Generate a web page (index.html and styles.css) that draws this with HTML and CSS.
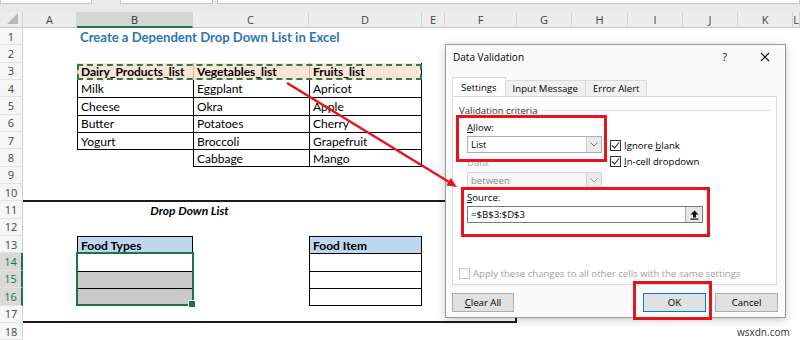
FILE: index.html
```html
<!DOCTYPE html>
<html lang="en">
<head>
    <meta charset="UTF-8">
    <meta name="viewport" content="width=device-width, initial-scale=1.0">
    <title>Create a Dependent Drop Down List in Excel</title>
    <link rel="stylesheet" href="styles.css">
</head>
<body>
<div class="app">
    <div class="toolbar">
        <span class="field name-box"></span>
        <span class="field fx-box"></span>
        <span class="field formula-box"></span>
    </div>

    <div class="sheet">
        <!-- column headers -->
        <div class="corner"><span class="tri"></span></div>
        <div class="ch">A</div>
        <div class="ch on">B</div>
        <div class="ch">C</div>
        <div class="ch">D</div>
        <div class="ch">E</div>
        <div class="ch">F</div>
        <div class="ch">G</div>
        <div class="ch">H</div>
        <div class="ch">I</div>
        <div class="ch">J</div>
        <div class="ch">K</div>
        <div class="ch">L</div>

        <!-- row headers -->
        <div class="rh r1">1</div>
        <div class="rh r2">2</div>
        <div class="rh r3">3</div>
        <div class="rh r4">4</div>
        <div class="rh r5">5</div>
        <div class="rh r6">6</div>
        <div class="rh r7">7</div>
        <div class="rh r8">8</div>
        <div class="rh r9">9</div>
        <div class="rh r10">10</div>
        <div class="rh r11">11</div>
        <div class="rh r12">12</div>
        <div class="rh r13">13</div>
        <div class="rh r14 on">14</div>
        <div class="rh r15 on">15</div>
        <div class="rh r16 on">16</div>
        <div class="rh r17">17</div>
        <div class="rh r18">18</div>

        <div class="band"></div>

        <div class="cell title r1">Create a Dependent Drop Down List in Excel</div>

        <!-- source lists -->
        <div class="cell t peach b r3 cB">Dairy_Products_list</div>
        <div class="cell t peach b r3 cC">Vegetables_list</div>
        <div class="cell t peach b rc r3 cD">Fruits_list</div>
        <div class="ants"></div>

        <div class="cell t nt r4 cB">Milk</div>
        <div class="cell t nt r4 cC">Eggplant</div>
        <div class="cell t nt rc r4 cD">Apricot</div>
        <div class="cell t r5 cB">Cheese</div>
        <div class="cell t r5 cC">Okra</div>
        <div class="cell t rc r5 cD">Apple</div>
        <div class="cell t r6 cB">Butter</div>
        <div class="cell t r6 cC">Potatoes</div>
        <div class="cell t rc r6 cD">Cherry</div>
        <div class="cell t r7 cB">Yogurt</div>
        <div class="cell t r7 cC">Broccoli</div>
        <div class="cell t rc r7 cD">Grapefruit</div>
        <div class="cell cap r8 cB"></div>
        <div class="cell t bt r8 cC">Cabbage</div>
        <div class="cell t bt rc r8 cD">Mango</div>

        <div class="cell caption r11">Drop Down List</div>

        <!-- drop down cells -->
        <div class="cell t rc blue b r13 cB">Food Types</div>
        <div class="cell t rc r14 cB"></div>
        <div class="cell t rc shade r15 cB"></div>
        <div class="cell t rc bt shade r16 cB"></div>
        <div class="sel"></div>

        <div class="cell t rc blue b r13 cD">Food Item</div>
        <div class="cell t rc r14 cD"></div>
        <div class="cell t rc r15 cD"></div>
        <div class="cell t rc bt r16 cD"></div>
    </div>

    <div class="dialog">
        <div class="dlg-title">
            <span class="dlg-name">Data Validation</span>
            <span class="dlg-help">?</span>
            <svg class="dlg-close" width="10" height="10" viewBox="0 0 10 10">
                <path d="M1 1 L9 9 M9 1 L1 9" stroke="#111" stroke-width="1.1" fill="none"/>
            </svg>
        </div>
        <div class="tabs">
            <span class="tab active">Settings</span>
            <span class="tab">Input Message</span>
            <span class="tab">Error Alert</span>
        </div>
        <div class="panel">
            <div class="legend"><span>Validation criteria</span></div>
            <div class="criteria">
                <div class="allow">
                    <div class="lbl"><u>A</u>llow:</div>
                    <div class="select">
                        <span>List</span>
                        <span class="drop"><svg width="8" height="5" viewBox="0 0 8 5"><path d="M0.5 0.5 L4 4 L7.5 0.5" stroke="#777" fill="none"/></svg></span>
                    </div>
                </div>
                <div class="checks">
                    <div class="check"><span class="box"><svg width="9" height="9" viewBox="0 0 9 9"><path d="M1 4.5 L3.5 7 L8 1.5" stroke="#222" stroke-width="1.1" fill="none"/></svg></span><span>Ignore <u>b</u>lank</span></div>
                    <div class="check"><span class="box"><svg width="9" height="9" viewBox="0 0 9 9"><path d="M1 4.5 L3.5 7 L8 1.5" stroke="#222" stroke-width="1.1" fill="none"/></svg></span><span><u>I</u>n-cell dropdown</span></div>
                </div>
            </div>
            <div class="lbl muted gap-data">Data:</div>
            <div class="select disabled">
                <span>between</span>
                <span class="drop"><svg width="8" height="5" viewBox="0 0 8 5"><path d="M0.5 0.5 L4 4 L7.5 0.5" stroke="#999" fill="none"/></svg></span>
            </div>
            <div class="lbl gap-source"><u>S</u>ource:</div>
            <div class="source">
                <span class="source-text">=$B$3:$D$3</span>
                <span class="pick"><svg width="9" height="10" viewBox="0 0 9 10"><path d="M4.5 0.5 L0.5 4.5 H3 V7.5 H6 V4.5 H8.5 Z" fill="#111"/><rect x="0.5" y="8.5" width="8" height="1.2" fill="#111"/></svg></span>
            </div>
            <div class="check apply"><span class="box off"></span><span>Apply these changes to all other cells with the same settings</span></div>
        </div>
        <div class="buttons">
            <span class="btn"><span><u>C</u>lear All</span></span>
            <span class="btn-group">
                <span class="btn default">OK</span>
                <span class="btn">Cancel</span>
            </span>
        </div>
    </div>

    <!-- annotations -->
    <div class="mark mark-allow"></div>
    <div class="mark mark-source"></div>
    <div class="mark mark-ok"></div>
    <svg class="arrow" width="800" height="340" viewBox="0 0 800 340">
        <line x1="287" y1="83" x2="449" y2="182" stroke="#e8141b" stroke-width="2.4"/>
        <polygon points="457,187 446.2,185.6 450.8,178" fill="#e8141b"/>
    </svg>
    <div class="watermark">wsxdn.com</div>
</div>
</body>
</html>
```

FILE: styles.css
```css
* {
    box-sizing: border-box;
}
body {
    margin: 0;
    background: #fff;
}
.app {
    position: relative;
    width: 800px;
    height: 340px;
    overflow: hidden;
    font-family: Lato, "Liberation Sans", sans-serif;
}

/* formula bar strip */
.toolbar {
    height: 12px;
    background: #e9e9e9;
    display: flex;
}
.field {
    height: 4px;
    background: #fff;
    border: 1px solid #c6c6c6;
    border-top: none;
}
.name-box {
    width: 92px;
}
.fx-box {
    width: 93px;
    margin-left: 28px;
}
.formula-box {
    flex: 1;
    margin-left: 4px;
}

/* grid */
.sheet {
    display: grid;
    grid-template-columns: 23px 54px 116px 116px 113px 23px 72px 55px 56px 55px 55px 55px 1fr;
    grid-template-rows: 16px repeat(18, 17.35px);
}
.corner {
    grid-row: 1;
    background: #ececec;
    border-right: 1px solid #d0d0d0;
    border-bottom: 1px solid #c8c8c8;
    position: relative;
}
.tri {
    position: absolute;
    right: 4px;
    bottom: 3px;
    width: 0;
    height: 0;
    border-left: 11px solid transparent;
    border-bottom: 11px solid #b9b9b9;
}
.ch {
    grid-row: 1;
    background: #ececec;
    border-right: 1px solid #d4d4d4;
    border-bottom: 1px solid #c8c8c8;
    font-family: "Open Sans", sans-serif;
    font-size: 11px;
    color: #444;
    display: flex;
    align-items: center;
    justify-content: center;
}
.ch.on {
    background: #d6d6d6;
    border-bottom: 2px solid #217346;
    color: #333;
}
.rh {
    grid-column: 1;
    background: #f6f6f6;
    border-right: 1px solid #d0d0d0;
    border-bottom: 1px solid #e2e2e2;
    font-family: "Open Sans", sans-serif;
    font-size: 11px;
    color: #444;
    display: flex;
    align-items: center;
    justify-content: center;
}
.rh.on {
    background: #d9d9d9;
    border-right: 2px solid #217346;
    color: #217346;
}

.r1 { grid-row: 2; }
.r2 { grid-row: 3; }
.r3 { grid-row: 4; }
.r4 { grid-row: 5; }
.r5 { grid-row: 6; }
.r6 { grid-row: 7; }
.r7 { grid-row: 8; }
.r8 { grid-row: 9; }
.r9 { grid-row: 10; }
.r10 { grid-row: 11; }
.r11 { grid-row: 12; }
.r12 { grid-row: 13; }
.r13 { grid-row: 14; }
.r14 { grid-row: 15; }
.r15 { grid-row: 16; }
.r16 { grid-row: 17; }
.r17 { grid-row: 18; }
.r18 { grid-row: 19; }
.cB { grid-column: 3; }
.cC { grid-column: 4; }
.cD { grid-column: 5; }

.cell {
    display: flex;
    align-items: center;
    padding-left: 3px;
    font-size: 12px;
    color: #000;
    white-space: nowrap;
    min-width: 0;
}
.t {
    border-left: 1px solid #000;
    border-top: 1px solid #000;
}
.t.nt {
    border-top: none;
}
.t.rc {
    border-right: 1px solid #000;
}
.t.bt {
    border-bottom: 1px solid #000;
}
.cap {
    border-top: 1px solid #000;
}
.b {
    font-weight: bold;
}
.title {
    grid-column: 3 / 6;
    font-size: 13.1px;
    font-weight: bold;
    color: #2e75b6;
}
.peach {
    background: #fce4d6;
    border-left-color: #c9b8ab;
    border-top: none;
}
.ants {
    grid-column: 3 / 6;
    grid-row: 4;
    margin-top: 1px;
    border: 2px dashed #2f7a4a;
}
.blue {
    background: #bdd7ee;
}
.shade {
    background: #c9c9c9;
}
.sel {
    grid-column: 3;
    grid-row: 15 / 18;
    margin: -1px -1px 0 -1px;
    border: 2px solid #217346;
    position: relative;
}
.sel::after {
    content: "";
    position: absolute;
    right: -4px;
    bottom: -4px;
    width: 6px;
    height: 6px;
    background: #217346;
    border: 1px solid #fff;
}
.band {
    grid-column: 2 / 8;
    grid-row: 12 / 19;
    border-top: 2px solid #1b1b1b;
    border-bottom: 2px solid #1b1b1b;
    border-right: 2px solid #1b1b1b;
    margin-top: -1px;
}
.caption {
    grid-column: 3 / 5;
    justify-content: center;
    padding-right: 10px;
    font-weight: bold;
    font-style: italic;
}

/* dialog */
.dialog {
    position: absolute;
    left: 445px;
    top: 44px;
    width: 341px;
    height: 274px;
    background: #fafafa;
    border: 1px solid #9a9a9a;
    box-shadow: 0 2px 8px rgba(0, 0, 0, 0.22);
    font-family: "Open Sans", sans-serif;
    font-size: 9.6px;
    color: #000;
    display: flex;
    flex-direction: column;
}
.dlg-title {
    height: 24px;
    display: flex;
    align-items: center;
    padding-left: 7px;
}
.dlg-name {
    flex: 1;
    font-size: 10px;
}
.dlg-help {
    font-size: 10.5px;
    margin-right: 33px;
}
.dlg-close {
    margin-right: 15px;
}
.tabs {
    display: flex;
    align-items: flex-end;
    height: 19px;
    margin-top: 8px;
    padding-left: 6px;
}
.tab {
    height: 16px;
    padding: 0 7px;
    border: 1px solid #d9d9d9;
    border-bottom: none;
    border-left: none;
    background: #f0f0f0;
    display: flex;
    align-items: center;
}
.tab.active {
    height: 19px;
    background: #fff;
    border-left: 1px solid #d9d9d9;
    padding: 0 8px;
}
.panel {
    height: 189px;
    margin: 0 8px 0 6px;
    background: #fff;
    border: 1px solid #d9d9d9;
    padding: 7px 6px 0 6px;
}
.legend {
    display: flex;
    align-items: center;
    height: 12px;
    color: #333;
}
.legend::after {
    content: "";
    flex: 1;
    margin-left: 4px;
    border-top: 1px solid #dcdcdc;
}
.criteria {
    display: flex;
    height: 31px;
    margin: 6px 0 0 8px;
}
.allow {
    width: 135px;
}
.lbl {
    height: 12px;
    line-height: 12px;
    margin-bottom: 2px;
}
.lbl.muted {
    color: #a6a6a6;
}
.gap-data {
    margin: 4px 0 3px 8px;
}
.gap-source {
    margin: 4px 0 2px 8px;
}
.select {
    height: 17px;
    width: 135px;
    border: 1px solid #adadad;
    background: #fff;
    display: flex;
    align-items: center;
    padding-left: 3px;
}
.select span:first-child {
    flex: 1;
}
.select.disabled {
    margin-left: 8px;
    height: 16px;
    background: #f6f6f6;
    border-color: #d4d4d4;
    color: #8c8c8c;
}
.drop {
    width: 15px;
    height: 100%;
    background: #eaeaea;
    border-left: 1px solid #d0d0d0;
    display: flex;
    align-items: center;
    justify-content: center;
}
.checks {
    margin-left: 8px;
    padding-top: 15px;
}
.check {
    display: flex;
    align-items: center;
    height: 16px;
}
.box {
    width: 11px;
    height: 11px;
    border: 1px solid #333;
    background: #fff;
    margin-right: 3px;
    display: flex;
    align-items: center;
    justify-content: center;
}
.box.off {
    border-color: #c4c4c4;
}
.source {
    margin-left: 8px;
    width: 236px;
    height: 17px;
    border: 1px solid #7a7a7a;
    background: #fff;
    display: flex;
    align-items: center;
    padding-left: 3px;
}
.source-text {
    flex: 1;
}
.pick {
    width: 17px;
    height: 100%;
    background: #e6e6e6;
    border-left: 1px solid #adadad;
    display: flex;
    align-items: center;
    justify-content: center;
}
.apply {
    margin-top: 42px;
    color: #a0a0a0;
}
.buttons {
    margin-top: 8px;
    height: 19px;
    padding: 0 7px 0 6px;
    display: flex;
    justify-content: space-between;
}
.btn-group {
    display: flex;
    gap: 9px;
}
.btn {
    width: 62px;
    height: 19px;
    background: #e1e1e1;
    border: 1px solid #adadad;
    display: flex;
    align-items: center;
    justify-content: center;
}
.btn-group .btn {
    width: 63px;
}
.btn.default {
    border: 1px solid #0078d7;
    box-shadow: inset 0 0 0 1px #d2e6f7;
}

/* red annotations */
.mark {
    position: absolute;
    border: 3px solid #e8141b;
}
.mark-allow {
    left: 456px;
    top: 115px;
    width: 151px;
    height: 47px;
}
.mark-source {
    left: 461px;
    top: 187px;
    width: 249px;
    height: 50px;
}
.mark-ok {
    left: 633px;
    top: 281px;
    width: 79px;
    height: 39px;
}
.arrow {
    position: absolute;
    left: 0;
    top: 0;
}
.watermark {
    position: absolute;
    left: 737px;
    top: 325px;
    font-family: "Open Sans", sans-serif;
    font-size: 10px;
    color: #333;
}
```
